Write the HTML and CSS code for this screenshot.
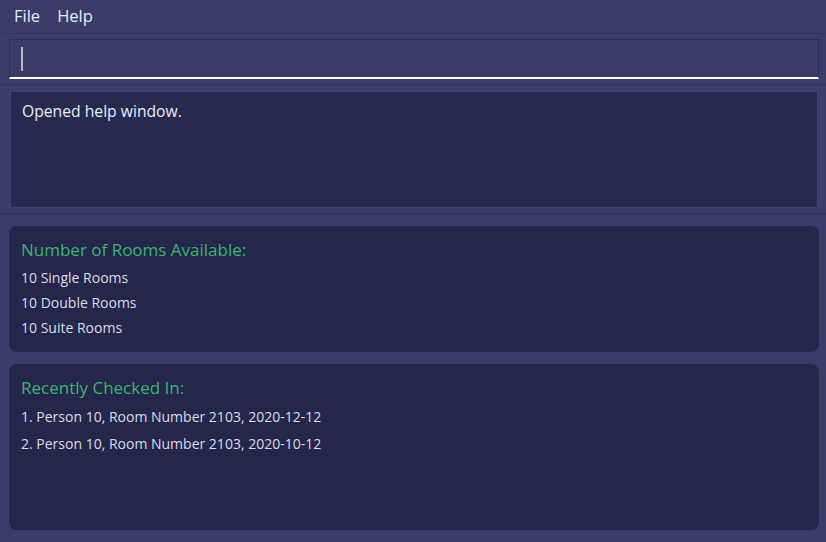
FILE: index.html
```html
<!DOCTYPE html>
<html>
<head>
<meta charset="utf-8">
<link rel="stylesheet" href="styles.css">
</head>
<body>
<div class="app">
  <div class="menubar">
    <span class="menu-item">File</span>
    <span class="menu-item">Help</span>
  </div>
  <div class="command-section">
    <div class="command-box"><span class="caret"></span></div>
  </div>
  <div class="result-section">
    <div class="result-box">Opened help window.</div>
  </div>
  <div class="cards">
    <div class="card card-rooms">
      <div class="card-title">Number of Rooms Available:</div>
      <div class="card-line">10 Single Rooms</div>
      <div class="card-line">10 Double Rooms</div>
      <div class="card-line">10 Suite Rooms</div>
    </div>
    <div class="card card-recent">
      <div class="card-title">Recently Checked In:</div>
      <div class="card-line recent">1. Person 10, Room Number 2103, 2020-12-12</div>
      <div class="card-line recent">2. Person 10, Room Number 2103, 2020-10-12</div>
    </div>
  </div>
</div>
</body>
</html>
```
FILE: styles.css
```css
html, body {
  margin: 0;
  padding: 0;
  background: #3b3c69;
  font-family: "Open Sans", "Noto Sans", sans-serif;
  color: #e6e6ee;
}
.app {
  width: 826px;
  height: 542px;
  display: flex;
  flex-direction: column;
  overflow: hidden;
}
.menubar {
  border-bottom: 1px solid #323460;
  display: flex;
  align-items: center;
  gap: 17px;
  padding-left: 14px;
  padding-bottom: 2px;
  box-sizing: border-box;
  height: 34px;
  font-size: 16.5px;
  color: #e8e8f0;
}
.command-section {
  padding: 5px 7px 5px 9px;
  border-bottom: 2px solid #35375f;
}
.command-box {
  height: 37px;
  border: 1px solid #2c2e55;
  border-bottom: 2px solid #ffffff;
  background: #3a3c67;
  display: flex;
  align-items: center;
  padding-left: 11px;
}
.caret {
  width: 2px;
  height: 24px;
  background: #b8b8c8;
}
.result-section {
  padding: 5px 8px 5px 10px;
  border-bottom: 2px solid #323460;
}
.result-box {
  height: 117px;
  border: 1px solid #40426f;
  background: #262950;
  padding: 8px 11px 7px;
  box-sizing: border-box;
  font-size: 15.7px;
  color: #ececf4;
}
.cards {
  flex: 1;
  display: flex;
  flex-direction: column;
  gap: 12px;
  padding: 11px 7px 12px 9px;
}
.card {
  background: #24274b;
  border-radius: 8px;
  padding: 11px 12px 10px;
  box-sizing: border-box;
}
.card-rooms {
  height: 126px;
}
.card-recent {
  flex: 1;
}
.card-title {
  color: #3db56e;
  font-size: 17px;
  line-height: 26px;
  margin-bottom: 2px;
}
.card-line {
  font-size: 14px;
  line-height: 25px;
  color: #dcdce6;
}
.card-line.recent {
  line-height: 27px;
}
```
